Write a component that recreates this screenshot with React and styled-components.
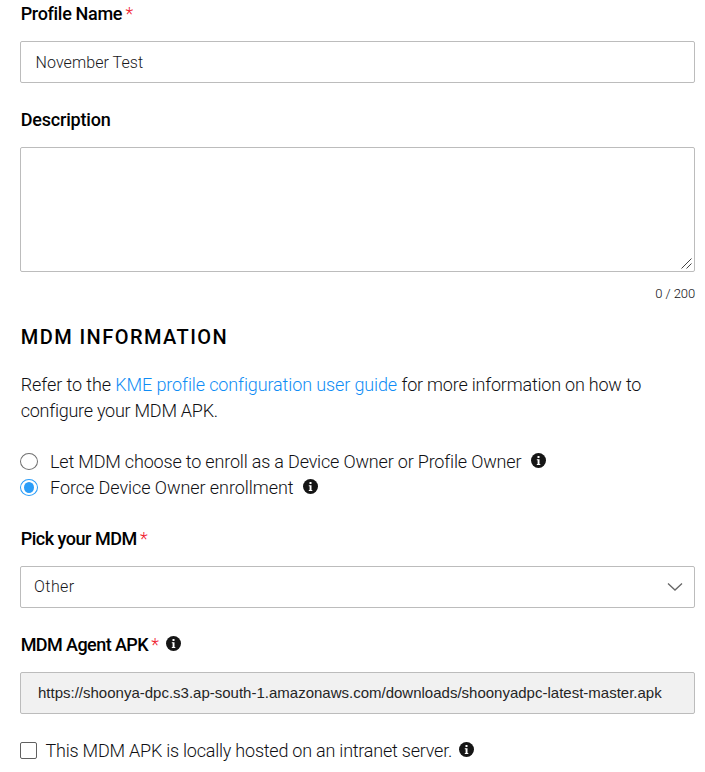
import React from "react";
import styled, { createGlobalStyle, css } from "styled-components";

const GlobalStyle = createGlobalStyle`
  body { margin: 0; background: #fff; }
  * { box-sizing: border-box; }
`;

const Form = styled.main`
  display: flex;
  flex-direction: column;
  width: 705px;
  height: 772px;
  overflow: hidden;
  padding: 0 10px 0 20px;
  font-family: Roboto, sans-serif;
  font-size: 18px;
  font-weight: 300;
  line-height: 26px;
  color: #101014;
  white-space: nowrap;
`;

const Field = styled.section`
  display: flex;
  flex-direction: column;
  gap: 15px;
  margin-bottom: ${(p) => p.$gap ?? 23}px;
`;

const Text = styled.span`
  letter-spacing: ${(p) => p.$spacing ?? 0}px;
`;

const Label = styled.div`
  display: flex;
  align-items: center;
  height: 26px;
  padding-left: 0.7px;
  font-weight: 500;
  color: #000;

  ${Text} { padding-top: 2px; }
`;

const Star = styled.span`
  margin-left: 3.3px;
  padding-top: 1px;
  font-weight: 300;
  color: #f0202e;
`;

const Box = styled.div`
  display: flex;
  align-items: center;
  justify-content: space-between;
  height: 42px;
  padding: ${(p) => p.$drop ?? 0}px 11px 0 ${(p) => p.$left}px;
  border: 1px solid #bcbcbc;
  border-radius: 2px;
  font-size: 16px;
  color: #18181c;
  ${(p) =>
    p.$disabled &&
    css`
      background: #f1f1f1;
      color: #252525;
      font-family: "Liberation Sans", sans-serif;
      font-size: 15px;
    `}
`;

const Area = styled.div`
  display: flex;
  align-items: flex-end;
  justify-content: flex-end;
  height: 125px;
  padding: 2px;
  border: 1px solid #bcbcbc;
  border-radius: 2px;
`;

const Counter = styled.div`
  margin: -3px 0 18px;
  text-align: right;
  font-size: 13px;
  line-height: 20px;
  color: #101014;
`;

const Heading = styled.h2`
  margin: 0 0 20px;
  padding-left: 0.7px;
  font-size: 20px;
  font-weight: 500;
  line-height: 30px;
  color: #000;
`;

const Copy = styled.p`
  margin: 0 0 24px;
  padding-left: 0.7px;
`;

const Link = styled.a`
  color: #0f8df5;
`;

const Options = styled.div`
  margin-bottom: 25px;
`;

const Option = styled.div`
  display: flex;
  align-items: center;
  height: 26px;

  ${Text} { padding-top: 2px; }
`;

const Radio = styled.span`
  display: flex;
  align-items: center;
  justify-content: center;
  width: 18px;
  height: 17px;
  margin-right: 12px;
  border: 1px solid ${(p) => (p.$on ? "#2b9df8" : "#707070")};
  border-radius: 50%;

  &::after {
    content: "";
    width: 10px;
    height: 11px;
    border-radius: 50%;
    background: ${(p) => (p.$on ? "#2b9df8" : "transparent")};
  }
`;

const Check = styled.span`
  width: 17px;
  height: 17px;
  margin-right: 8.5px;
  border: 1px solid #606060;
  border-radius: 2px;
`;

const Icon = styled.svg`
  display: block;
  flex: none;
  margin: 0 0 1px ${(p) => p.$left}px;
`;

const Info = ({ left }) => (
  <Icon $left={left} width="15" height="15" viewBox="0 0 15 15">
    <circle cx="7.5" cy="7.5" r="7.5" fill="#151515" />
    <path d="M6.5 3h2v2h-2zM5.8 6.3h2.7v4.6h.8v1H5.8v-1h.8V7.3h-.8z" fill="#fff" />
  </Icon>
);

const ResizeGrip = () => (
  <svg width="11" height="11" viewBox="0 0 11 11" fill="none" stroke="#444">
    <path d="M.5 10.5l10-10M5.5 10.5l5-5" />
  </svg>
);

const Chevron = () => (
  <svg width="16" height="8" viewBox="0 0 16 8" fill="none" stroke="#666" strokeWidth="1.3">
    <path d="M1 .5l7 6.5 7-6.5" />
  </svg>
);

export default function App() {
  return (
    <>
      <GlobalStyle />
      <Form>
        <Field>
          <Label><Text $spacing={-0.32}>Profile Name</Text><Star>*</Star></Label>
          <Box $left={14.5} $drop={2}><Text $spacing={0.08}>November Test</Text></Box>
        </Field>
        <Field $gap={15}>
          <Label><Text $spacing={-0.18}>Description</Text></Label>
          <Area><ResizeGrip /></Area>
        </Field>
        <Counter><Text $spacing={-0.1}>0 / 200</Text></Counter>
        <Heading><Text $spacing={1.45}>MDM INFORMATION</Text></Heading>
        <Copy>
          <Text $spacing={-0.09}>Refer to the</Text>{" "}
          <Link><Text $spacing={-0.12}>KME profile configuration user guide</Text></Link>{" "}
          <Text $spacing={-0.21}>for more information on how to</Text>
          <br />
          <Text $spacing={-0.25}>configure your MDM APK.</Text>
        </Copy>
        <Options>
          <Option>
            <Radio />
            <Text $spacing={-0.18}>Let MDM choose to enroll as a Device Owner or Profile Owner</Text>
            <Info left={10} />
          </Option>
          <Option>
            <Radio $on />
            <Text $spacing={-0.06}>Force Device Owner enrollment</Text>
            <Info left={9.5} />
          </Option>
        </Options>
        <Field>
          <Label><Text $spacing={-0.48}>Pick your MDM</Text><Star>*</Star></Label>
          <Box $left={13}><Text $spacing={0.45}>Other</Text><Chevron /></Box>
        </Field>
        <Field>
          <Label><Text $spacing={-0.57}>MDM Agent APK</Text><Star>*</Star><Info left={7} /></Label>
          <Box $left={17} $disabled>
            <Text>https://shoonya-dpc.s3.ap-south-1.amazonaws.com/downloads/shoonyadpc-latest-master.apk</Text>
          </Box>
        </Field>
        <Option>
          <Check />
          <Text $spacing={-0.225}>This MDM APK is locally hosted on an intranet server.</Text>
          <Info left={6.5} />
        </Option>
      </Form>
    </>
  );
}
